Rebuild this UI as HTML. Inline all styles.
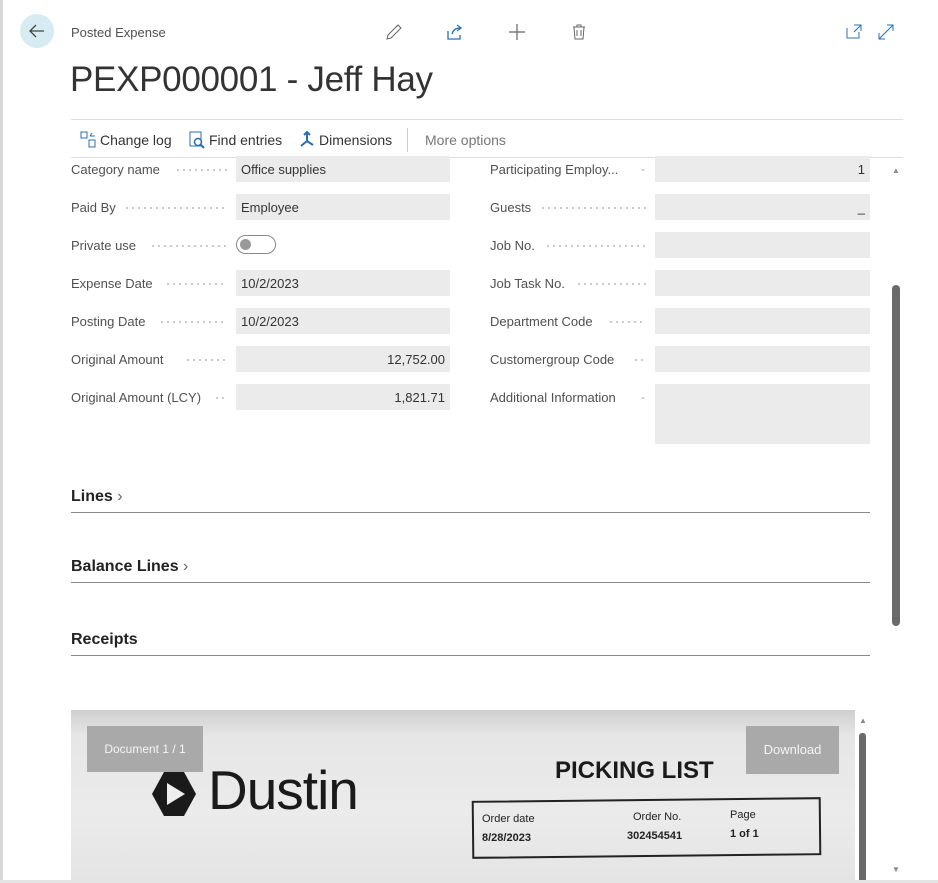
<!DOCTYPE html><html><head><style>
body{margin:0;width:938px;height:883px;background:#fff;font-family:"Liberation Sans",sans-serif;position:relative;overflow:hidden;color:#505050}
.a{position:absolute}
.lbl{position:absolute;font-size:13px;color:#505050;white-space:nowrap}
.dots{position:absolute;height:2px;background-image:radial-gradient(circle,#bbb 0.8px,transparent 1px);background-size:6px 2px}
.in{position:absolute;background:#ebebeb;height:26px;font-size:13px;color:#333;line-height:28px;padding:0 5px;box-sizing:border-box}
.sec{position:absolute;left:71px;width:799px;border-bottom:1px solid #888;font-size:16px;color:#222;font-weight:bold;padding-bottom:6px}
</style></head><body>
<div class="a" style="left:0;top:0;width:3px;height:883px;background:#d8d8d8"></div>
<div class="a" style="left:20px;top:14px;width:34px;height:34px;border-radius:50%;background:#d6ecf2"></div>
<svg class="a" style="left:27px;top:21px" width="20" height="20"><path d="M17 10H3M9 4L3 10L9 16" stroke="#444" stroke-width="1.3" fill="none"/></svg>
<div class="lbl" style="left:71px;top:25px;font-size:13px">Posted Expense</div>
<div class="a" style="left:70px;top:60px;font-size:35px;color:#333;letter-spacing:-0.3px">PEXP000001 - Jeff Hay</div>
<svg class="a" style="left:384px;top:22px" width="20" height="20"><path d="M3 17L4 13L14 3L17 6L7 16Z" stroke="#666" fill="none"/></svg>
<svg class="a" style="left:445px;top:22px" width="20" height="20"><path d="M3 9V17H15V13M7 12C8 8 11 6 15 6M12 3L16 6L12 9" stroke="#2a6fb5" stroke-width="1.3" fill="none"/></svg>
<svg class="a" style="left:508px;top:23px" width="18" height="18"><path d="M9 1V17M1 9H17" stroke="#666" stroke-width="1.2"/></svg>
<svg class="a" style="left:570px;top:23px" width="18" height="18"><path d="M3 4H15M7 4V2H11V4M4 4L5 16H13L14 4M7 7V13M11 7V13" stroke="#666" fill="none"/></svg>
<svg class="a" style="left:845px;top:23px" width="18" height="18"><path d="M2 5V15H14V9M9 2H16V8M16 2L9 9" stroke="#2a6fb5" fill="none"/></svg>
<svg class="a" style="left:877px;top:23px" width="18" height="18"><path d="M2 16L16 2M10 2H16V8M2 10V16H8" stroke="#2a6fb5" fill="none"/></svg>
<div class="a" style="left:71px;top:119px;width:832px;border-top:1px solid #ddd"></div>
<div class="a" style="left:71px;top:157px;width:832px;border-top:1px solid #ddd"></div>
<svg class="a" style="left:80px;top:131px" width="18" height="18"><rect x="1" y="1" width="6" height="6" stroke="#2a6fb5" fill="none"/><rect x="9" y="9" width="6" height="7" stroke="#2a6fb5" fill="none"/><path d="M10 5H15M12 2L10 5" stroke="#2a6fb5" fill="none"/></svg>
<div class="lbl" style="left:100px;top:132px;font-size:14px;color:#333">Change log</div>
<svg class="a" style="left:188px;top:131px" width="18" height="18"><rect x="2" y="1" width="11" height="14" stroke="#2a6fb5" fill="none"/><circle cx="10" cy="11" r="3.5" stroke="#2a6fb5" stroke-width="1.5" fill="none"/><path d="M12 13L16 17" stroke="#2a6fb5" stroke-width="2"/></svg>
<div class="lbl" style="left:209px;top:132px;font-size:14px;color:#333">Find entries</div>
<svg class="a" style="left:298px;top:131px" width="18" height="18"><path d="M9 2V10M3 15L9 10L15 14M6 4L9 1L12 4" stroke="#2a6fb5" stroke-width="2" fill="none"/></svg>
<div class="lbl" style="left:319px;top:132px;font-size:14px;color:#333">Dimensions</div>
<div class="a" style="left:407px;top:128px;height:24px;border-left:1px solid #ccc"></div>
<div class="lbl" style="left:425px;top:132px;font-size:14px;color:#777">More options</div>

<div class="lbl" style="left:71px;top:162px">Category name</div><div class="dots" style="left:175px;top:169px;width:52px"></div><div class="in" style="left:236px;top:156px;width:214px">Office supplies</div>
<div class="lbl" style="left:71px;top:200px">Paid By</div><div class="dots" style="left:124px;top:207px;width:103px"></div><div class="in" style="left:236px;top:194px;width:214px">Employee</div>
<div class="lbl" style="left:71px;top:238px">Private use</div><div class="dots" style="left:150px;top:245px;width:77px"></div>
<div class="a" style="left:236px;top:235px;width:40px;height:19px;border:1px solid #888;border-radius:10px;box-sizing:border-box"></div><div class="a" style="left:240px;top:239px;width:11px;height:11px;border-radius:50%;background:#999"></div>
<div class="lbl" style="left:71px;top:276px">Expense Date</div><div class="dots" style="left:165px;top:283px;width:62px"></div><div class="in" style="left:236px;top:270px;width:214px">10/2/2023</div>
<div class="lbl" style="left:71px;top:314px">Posting Date</div><div class="dots" style="left:159px;top:321px;width:68px"></div><div class="in" style="left:236px;top:308px;width:214px">10/2/2023</div>
<div class="lbl" style="left:71px;top:352px">Original Amount</div><div class="dots" style="left:185px;top:359px;width:42px"></div><div class="in" style="left:236px;top:346px;width:214px;text-align:right">12,752.00</div>
<div class="lbl" style="left:71px;top:390px">Original Amount (LCY)</div><div class="dots" style="left:214px;top:397px;width:13px"></div><div class="in" style="left:236px;top:384px;width:214px;text-align:right">1,821.71</div>

<div class="lbl" style="left:490px;top:162px">Participating Employ...</div><div class="dots" style="left:640px;top:169px;width:6px"></div><div class="in" style="left:655px;top:156px;width:215px;text-align:right">1</div>
<div class="lbl" style="left:490px;top:200px">Guests</div><div class="dots" style="left:540px;top:207px;width:106px"></div><div class="in" style="left:655px;top:194px;width:215px;text-align:right">_</div>
<div class="lbl" style="left:490px;top:238px">Job No.</div><div class="dots" style="left:545px;top:245px;width:101px"></div><div class="in" style="left:655px;top:232px;width:215px"></div>
<div class="lbl" style="left:490px;top:276px">Job Task No.</div><div class="dots" style="left:576px;top:283px;width:70px"></div><div class="in" style="left:655px;top:270px;width:215px"></div>
<div class="lbl" style="left:490px;top:314px">Department Code</div><div class="dots" style="left:608px;top:321px;width:38px"></div><div class="in" style="left:655px;top:308px;width:215px"></div>
<div class="lbl" style="left:490px;top:352px">Customergroup Code</div><div class="dots" style="left:633px;top:359px;width:13px"></div><div class="in" style="left:655px;top:346px;width:215px"></div>
<div class="lbl" style="left:490px;top:390px">Additional Information</div><div class="dots" style="left:640px;top:397px;width:6px"></div><div class="in" style="left:655px;top:384px;width:215px;height:60px"></div>

<div class="sec" style="top:488px">Lines <span style="font-weight:normal;color:#666">›</span></div>
<div class="sec" style="top:558px">Balance Lines <span style="font-weight:normal;color:#666">›</span></div>
<div class="sec" style="top:631px">Receipts</div>

<div class="a" style="left:892px;top:166px;font-size:8px;color:#888">▲</div>
<div class="a" style="left:892px;top:285px;width:8px;height:341px;background:#6a6a6a;border-radius:4px"></div>
<div class="a" style="left:892px;top:865px;font-size:8px;color:#888">▼</div>

<div class="a" style="left:71px;top:710px;width:784px;height:171px;background:linear-gradient(180deg,#cfcfcf 0%,#e6e6e6 15%,#ebebeb 60%,#e4e4e4 100%)"></div>
<div class="a" style="left:87px;top:726px;width:116px;height:46px;background:#a9a9a9;color:#f4f4f4;font-size:12px;line-height:46px;text-align:center">Document 1 / 1</div>
<div class="a" style="left:746px;top:726px;width:93px;height:48px;background:#a9a9a9;color:#f4f4f4;font-size:13px;line-height:48px;text-align:center">Download</div>
<svg class="a" style="left:150px;top:770px" width="50" height="48"><path d="M14 2H34L46 24L34 46H14L2 24Z" fill="#1a1a1a"/><path d="M17 13L35 24L17 35Z" fill="#eee"/></svg>
<div class="a" style="left:208px;top:758px;font-size:55px;color:#1a1a1a;letter-spacing:-1px">Dustin</div>
<div class="a" style="left:555px;top:757px;font-size:24px;font-weight:bold;color:#1a1a1a">PICKING LIST</div>
<div class="a" style="left:472px;top:799px;width:349px;height:58px;border:2px solid #222;box-sizing:border-box;transform:rotate(-0.6deg)"></div>
<div class="a" style="left:482px;top:813px;font-size:11px;color:#222">Order date</div>
<div class="a" style="left:482px;top:832px;font-size:11px;color:#222;font-weight:bold">8/28/2023</div>
<div class="a" style="left:633px;top:811px;font-size:11px;color:#222">Order No.</div>
<div class="a" style="left:627px;top:830px;font-size:11px;color:#222;font-weight:bold">302454541</div>
<div class="a" style="left:730px;top:809px;font-size:11px;color:#222">Page</div>
<div class="a" style="left:730px;top:828px;font-size:11px;color:#222;font-weight:bold">1 of 1</div>
<div class="a" style="left:859px;top:716px;font-size:8px;color:#888">▲</div>
<div class="a" style="left:859px;top:733px;width:7px;height:150px;background:#6a6a6a;border-radius:3px"></div>
<div class="a" style="left:0;top:880px;width:938px;height:3px;background:#e4e4e4"></div>
</body></html>
